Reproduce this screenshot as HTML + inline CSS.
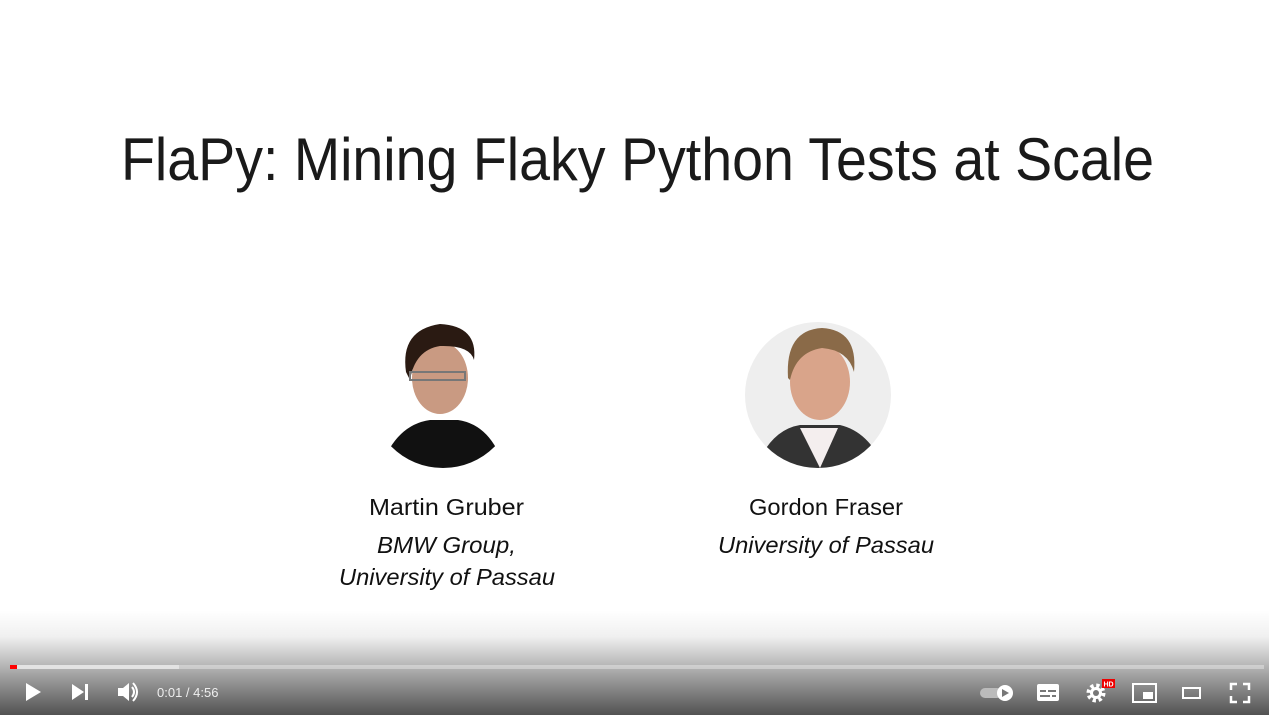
<!DOCTYPE html>
<html><head><meta charset="utf-8"><style>
html,body{margin:0;padding:0;width:1269px;height:715px;overflow:hidden;background:#fff;font-family:"Liberation Sans",sans-serif}
.ctl{position:absolute;left:0;top:610px;width:1269px;height:105px;background:linear-gradient(to bottom,rgba(0,0,0,0) 0%,rgba(0,0,0,0.06) 25%,rgba(0,0,0,0.35) 60%,rgba(0,0,0,0.68) 100%)}
</style></head><body>
<svg width="1269" height="715" style="position:absolute;left:0;top:0" font-family="Liberation Sans, sans-serif">
<text x="121" y="180" font-size="60" textLength="1033" lengthAdjust="spacingAndGlyphs" fill="#1a1a1a">FlaPy: Mining Flaky Python Tests at Scale</text>
<defs><clipPath id="c1"><circle cx="443" cy="395" r="73"/></clipPath><clipPath id="c2"><circle cx="818" cy="395" r="73"/></clipPath></defs>
<g clip-path="url(#c1)">
<rect x="370" y="322" width="146" height="146" fill="#fff"/>
<path d="M380 470 Q395 425 430 420 L458 420 Q492 425 505 470 Z" fill="#111"/>
<ellipse cx="440" cy="378" rx="28" ry="36" fill="#c99a82"/>
<path d="M406 372 Q400 330 440 324 Q478 326 474 360 Q470 345 440 346 Q415 350 410 380 Z" fill="#2a1a12"/>
<rect x="410" y="372" width="55" height="8" fill="none" stroke="#777" stroke-width="2"/>
</g>
<g clip-path="url(#c2)">
<rect x="745" y="322" width="146" height="146" fill="#eeeeee"/>
<path d="M755 470 Q770 430 800 425 L840 425 Q870 432 885 470 Z" fill="#333"/>
<path d="M800 428 L820 468 L838 428 Z" fill="#f4eeee"/>
<ellipse cx="820" cy="382" rx="30" ry="38" fill="#d9a48a"/>
<path d="M788 378 Q785 330 822 328 Q858 330 854 372 Q848 350 822 348 Q796 352 790 380 Z" fill="#8a6a48"/>
</g>
<text x="369" y="515" font-size="23" textLength="155" lengthAdjust="spacingAndGlyphs" fill="#111">Martin Gruber</text>
<text x="377" y="553" font-size="23" font-style="italic" textLength="139" lengthAdjust="spacingAndGlyphs" fill="#111">BMW Group,</text>
<text x="339" y="585" font-size="23" font-style="italic" textLength="216" lengthAdjust="spacingAndGlyphs" fill="#111">University of Passau</text>
<text x="749" y="515" font-size="23" textLength="154" lengthAdjust="spacingAndGlyphs" fill="#111">Gordon Fraser</text>
<text x="718" y="553" font-size="23" font-style="italic" textLength="216" lengthAdjust="spacingAndGlyphs" fill="#111">University of Passau</text>
</svg>
<div class="ctl"></div>
<svg width="1269" height="715" style="position:absolute;left:0;top:0" font-family="Liberation Sans, sans-serif">
<rect x="10" y="665" width="1254" height="4" fill="rgba(255,255,255,0.35)"/>
<rect x="10" y="665" width="169" height="4" fill="rgba(230,230,230,0.85)"/>
<rect x="10" y="665" width="7" height="4" fill="#f00"/>
<path d="M26 683 L41 692 L26 701 Z" fill="#fff"/>
<path d="M72 684 L84 692 L72 700 Z" fill="#fff"/><rect x="85" y="684" width="3" height="16" fill="#fff"/>
<path d="M118 688 L123 688 L129 683 L129 701 L123 696 L118 696 Z" fill="#fff"/>
<path d="M132 687 Q136 692 132 697" stroke="#fff" stroke-width="2" fill="none"/>
<path d="M133 683 Q141 692 133 701" stroke="#fff" stroke-width="2" fill="none"/>
<text x="157" y="697" font-size="13" fill="#eee">0:01 / 4:56</text>
<rect x="980" y="688" width="22" height="10" rx="5" fill="#bbb"/>
<circle cx="1005" cy="693" r="8" fill="#fff"/><path d="M1002 689 L1009 693 L1002 697 Z" fill="#777"/>
<rect x="1037" y="684" width="22" height="17" rx="2" fill="#fff"/>
<rect x="1040" y="690" width="6" height="2" fill="#777"/><rect x="1048" y="690" width="8" height="2" fill="#777"/>
<rect x="1040" y="695" width="10" height="2" fill="#777"/><rect x="1052" y="695" width="4" height="2" fill="#777"/>
<circle cx="1096" cy="693" r="7" fill="none" stroke="#fff" stroke-width="5" stroke-dasharray="3 2.5"/>
<circle cx="1096" cy="693" r="6" fill="#fff"/><circle cx="1096" cy="693" r="3" fill="#777"/>
<rect x="1102" y="679" width="13" height="9" fill="#e00"/><text x="1103.5" y="686.5" font-size="7" font-weight="bold" fill="#fff">HD</text>
<rect x="1133" y="684" width="23" height="18" fill="none" stroke="#fff" stroke-width="2"/>
<rect x="1143" y="692" width="10" height="7" fill="#fff"/>
<rect x="1183" y="688" width="17" height="10" fill="none" stroke="#fff" stroke-width="2"/>
<path d="M1231 690 V684 H1237 M1243 684 H1249 V690 M1249 696 V702 H1243 M1237 702 H1231 V696" fill="none" stroke="#fff" stroke-width="2.5"/>
</svg>
</body></html>
